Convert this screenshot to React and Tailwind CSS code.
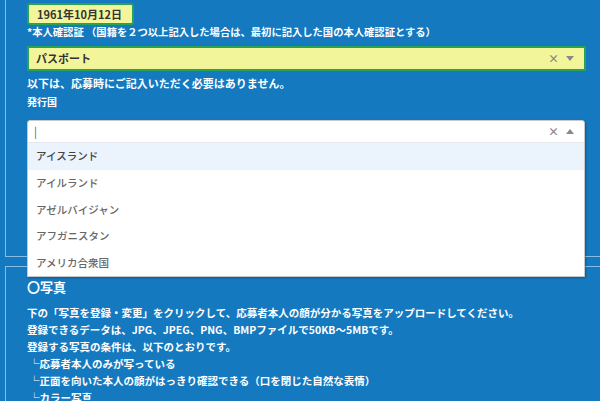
const jp = { fontFamily: '"Noto Sans CJK JP", "Noto Sans", sans-serif' }

const countries = ['アイスランド', 'アイルランド', 'アゼルバイジャン', 'アフガニスタン', 'アメリカ合衆国']

function Controls({ open }) {
  return (
    <div className="flex items-center gap-[7px] text-[#888]">
      <span className="text-[11px] leading-none font-bold">×</span>
      <svg width="8" height="5" viewBox="0 0 8 5">
        {open ? <path d="M0 5 L4 0 L8 5 Z" fill="#888" /> : <path d="M0 0 L8 0 L4 5 Z" fill="#888" />}
      </svg>
    </div>
  )
}

export default function App() {
  return (
    <div className="w-[600px] h-[401px] overflow-hidden bg-[#1479bf] text-white" style={jp}>
      <div className="relative ml-[5px] h-[257px] border-l border-b border-[#86bde6] pl-[21px] pt-[3px]">
        <div className="w-[107px] h-[22px] rounded-[3px] border-2 border-[#2aa256] bg-[#f3f59b] pl-[8px] text-[11px] leading-[18px] font-bold text-[#333]">
          1961年10月12日
        </div>
        <p className="mt-[0px] text-[10.3px] leading-[14px] font-bold">
          *本人確認証 （国籍を２つ以上記入した場合は、最初に記入した国の本人確認証とする）
        </p>
        <div className="mt-[7px] w-[559px] h-[25px] border-2 border-[#2aa256] bg-[#f3f59b] pl-[7px] pr-[10px] flex items-center justify-between">
          <span className="text-[11px] font-bold text-[#333]">パスポート</span>
          <Controls />
        </div>
        <p className="mt-[4px] text-[11px] leading-[16px] font-bold">以下は、応募時にご記入いただく必要はありません。</p>
        <p className="mt-[4px] text-[10px] leading-[14px] font-bold">発行国</p>
        <div className="absolute left-[21px] top-[120px] w-[558px] bg-white rounded-t-[3px] border border-[#c8c8c8] shadow-[1px_1px_2px_rgba(0,0,0,0.25)]">
          <div className="h-[22px] flex items-center justify-between pl-[6px] pr-[10px] border-b border-[#e4e8ee]">
            <span className="text-[11px] text-[#555] leading-none">|</span>
            <Controls open />
          </div>
          {countries.map((c, i) => (
            <div
              key={c}
              className={`h-[26.6px] flex items-center pl-[8px] text-[10.5px] font-medium ${
                i === 0 ? 'bg-[#ebf3fc] text-[#444]' : 'text-[#666]'
              }`}
            >
              {c}
            </div>
          ))}
        </div>
      </div>
      <div className="mt-[9px] ml-[5px] border-l border-t border-[#86bde6] pl-[21px] pt-[10px]">
        <p className="text-[13px] leading-[20px] font-bold">〇写真</p>
        <div className="mt-[7px] text-[10.5px] leading-[17px] font-bold">
          <p>下の「写真を登録・変更」をクリックして、応募者本人の顔が分かる写真をアップロードしてください。</p>
          <p>登録できるデータは、JPG、JPEG、PNG、BMPファイルで50KB～5MBです。</p>
          <p>登録する写真の条件は、以下のとおりです。</p>
          <p className="pl-[2px]">└応募者本人のみが写っている</p>
          <p className="pl-[2px]">└正面を向いた本人の顔がはっきり確認できる（口を閉じた自然な表情）</p>
          <p className="pl-[2px]">└カラー写真</p>
        </div>
      </div>
    </div>
  )
}
